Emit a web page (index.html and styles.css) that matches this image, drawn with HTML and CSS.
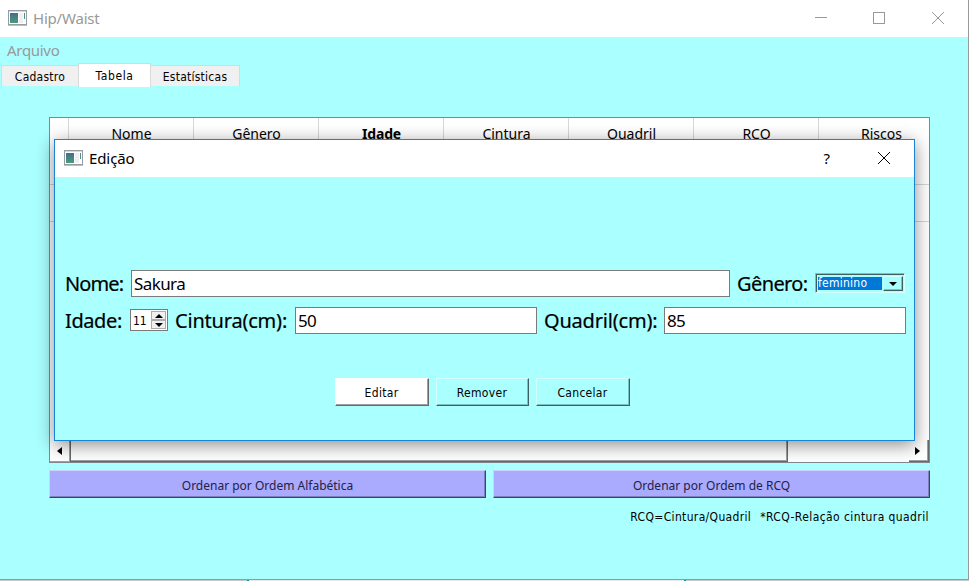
FILE: index.html
```html
<!DOCTYPE html>
<html lang="pt">
<head>
<meta charset="utf-8">
<title>Hip/Waist</title>
<link rel="stylesheet" href="styles.css">
</head>
<body>
<svg width="0" height="0" class="defs" aria-hidden="true">
  <defs>
    <linearGradient id="pane" x1="0" y1="0" x2="0" y2="1"><stop offset="0" stop-color="#426c92"/><stop offset="1" stop-color="#4e9b78"/></linearGradient>
    <symbol id="app" viewBox="0 0 19 16">
      <rect x=".5" y=".5" width="18" height="14" fill="#fff" stroke="#969ca3"/>
      <path d="M0 15.5h19" stroke="#b9bdc1"/>
      <path d="M1 1.5h17" stroke="#d5d9dd"/>
      <rect x="2" y="3" width="8" height="10" fill="url(#pane)"/>
      <rect x="11" y="3" width="4" height="10" fill="#eef0f0"/>
      <rect x="16" y="3" width="1" height="6" fill="#50927f"/>
    </symbol>
  </defs>
</svg>
<div class="window">
  <header class="titlebar">
    <svg class="appicon" width="19" height="16"><use href="#app"/></svg>
    <span class="title">Hip/Waist</span>
    <svg class="controls" width="130" height="12" fill="none" stroke="#999" shape-rendering="crispEdges"><path d="M0 5.5h12M58.500 .5h11v11h-11z"/><path shape-rendering="auto" d="M117 0l12 12M129 0l-12 12"/></svg>
  </header>
  <nav class="menubar"><span>Arquivo</span></nav>
  <div class="tabs">
    <div class="tab first"><span>Cadastro</span></div>
    <div class="tab active"><span>Tabela</span></div>
    <div class="tab last"><span>Estatísticas</span></div>
  </div>
  <main class="content">
    <div class="table">
      <div class="head">
        <div class="corner"></div>
        <div class="cell">Nome</div><div class="cell">Gênero</div><div class="cell sorted">Idade</div><div class="cell">Cintura</div><div class="cell">Quadril</div><div class="cell">RCQ</div><div class="cell">Riscos</div>
      </div>
      <div class="row"></div>
      <div class="blank"></div>
      <div class="scroll">
        <div class="arrow left"><svg width="5" height="8"><path d="M5 0v8L0 4z"/></svg></div>
        <div class="thumb"></div>
        <div class="arrow right"><svg width="5" height="8"><path d="M0 0v8l5-4z"/></svg></div>
      </div>
    </div>
    <div class="sorts">
      <div class="sort"><span>Ordenar por Ordem Alfabética</span></div>
      <div class="sort"><span>Ordenar por Ordem de RCQ</span></div>
    </div>
    <div class="notes"><span class="n1">RCQ=Cintura/Quadril</span><span class="n2">*RCQ-Relação cintura quadril</span></div>
  </main>
</div>
<div class="behind"></div>
<section class="dialog">
  <header class="dialogbar">
    <svg class="appicon" width="19" height="16"><use href="#app"/></svg>
    <span class="dtitle">Edição</span>
    <span class="help">?</span>
    <svg class="close" width="12" height="12" stroke="#000"><path d="M0 0l12 12M12 0L0 12"/></svg>
  </header>
  <div class="form">
    <div class="line">
      <label class="l-nome">Nome:</label><div class="input nome">Sakura</div>
      <label class="l-genero">Gênero:</label>
      <div class="combo"><span>feminino</span><div class="drop"><svg width="8" height="4"><path d="M0 0h8L4 4z"/></svg></div></div>
    </div>
    <div class="line">
      <label class="l-idade">Idade:</label>
      <div class="spin"><span>11</span><div class="steps"><i><svg width="8" height="4"><path d="M0 4h8L4 0z"/></svg></i><i><svg width="8" height="4"><path d="M0 0h8L4 4z"/></svg></i></div></div>
      <label class="l-cintura">Cintura(cm):</label><div class="input cintura">50</div>
      <label class="l-quadril">Quadril(cm):</label><div class="input quadril">85</div>
    </div>
  </div>
  <div class="actions">
    <div class="btn primary">Editar</div><div class="btn mid">Remover</div><div class="btn">Cancelar</div>
  </div>
</section>
</body>
</html>
```
FILE: styles.css
```css
* { box-sizing: border-box; }
body { margin: 0; width: 969px; height: 581px; overflow: hidden; position: relative; background: #aff; font-family: "Noto Sans", sans-serif; color: #000; }
svg { display: block; flex: none; }
.defs { position: absolute; }
span, label, .cell, .btn { white-space: nowrap; }
.window { height: 580px; border-right: 1px solid #999; border-bottom: 1px solid #999; background: #aff; display: flex; flex-direction: column; }
.behind { height: 1px; background: linear-gradient(90deg, #c8c8c8 0 247px, #00a0a0 247px 249px, #e8e8e8 249px 684px, #00a0a0 684px 686px, #c8c8c8 686px); }
.titlebar { height: 37px; flex: none; background: #fff; display: flex; align-items: center; padding: 0 23px 0 8px; }
.appicon { margin-top: -1px; }
.title { margin: -2px 0 0 6px; font-size: 15px; color: #999; letter-spacing: -.2px; }
.controls { margin-left: auto; margin-top: -1px; }
.menubar { height: 27px; flex: none; padding-left: 7px; font-size: 15px; line-height: 27px; color: #999; letter-spacing: -.3px; }
.tabs { height: 23px; flex: none; display: flex; align-items: flex-end; padding-left: 1px; }
.tab { height: 21px; margin-bottom: 1px; background: #f0f0f0; border: 1px solid #d9d9d9; border-bottom: 0; font-family: "DejaVu Sans Condensed", "DejaVu Sans", sans-serif; font-stretch: condensed; font-size: 12px; line-height: 22px; letter-spacing: .25px; display: flex; justify-content: center; }
.first { width: 77px; border-right: 0; }
.active { width: 73px; height: 24px; margin-bottom: 0; background: #fff; line-height: 24px; letter-spacing: .6px; }
.last { width: 89px; border-left: 0; }
.content { padding: 30px 38px 0 49px; display: flex; flex-direction: column; }
.table { height: 346px; border: 1px solid #828790; background: #fff; display: flex; flex-direction: column; overflow: hidden; }
.head { height: 67px; flex: none; border-bottom: 1px solid #d5d5d5; display: flex; }
.corner { width: 19px; flex: none; border-right: 1px solid #d9d9d9; }
.cell { width: 125px; flex: none; border-right: 1px solid #d9d9d9; text-align: center; font-size: 14px; line-height: 31px; padding-left: 1px; }
.sorted { font-weight: 700; letter-spacing: -.2px; }
.row { height: 37px; border-bottom: 1px solid #d5d5d5; flex: none; }
.blank { flex: 1; }
.scroll { height: 22px; display: flex; }
.arrow { width: 20px; display: flex; align-items: center; justify-content: center; border-right: 1px solid #a0a0a0; border-bottom: 1px solid #a0a0a0; }
.left { padding-right: 1px; }
.thumb { width: 718px; border: solid #696969; border-width: 0 1px 1px; box-shadow: inset -1px -1px #a0a0a0; }
.right { margin-left: auto; padding-right: 2px; border-color: #696969; box-shadow: inset -1px -1px #a0a0a0; }
.sorts { display: grid; grid-template-columns: 437px 437px; gap: 7px; margin-top: 7px; }
.sort { height: 28px; background: #aaf; border: 1px solid; border-color: #cfcfff #404060 #404060 #cfcfff; box-shadow: inset -1px -1px #7f7fbf; text-align: center; font-size: 12px; line-height: 29px; color: #222244; }
.notes { display: flex; justify-content: flex-end; gap: 9px; padding-right: 1px; margin-top: 10px; font: 12px/18px "DejaVu Sans Condensed", "DejaVu Sans", sans-serif; font-stretch: condensed; }
.n1 { letter-spacing: .34px; }
.n2 { letter-spacing: .41px; }
.dialog { position: absolute; left: 54px; top: 139px; width: 861px; height: 302px; border: 1px solid #1883d7; background: #aff; box-shadow: 0 4px 17px rgba(0,0,0,.45); display: flex; flex-direction: column; clip-path: inset(-22px -15px -22px -20px); }
.dialogbar { height: 37px; flex: none; display: flex; align-items: center; background: #fff; padding: 0 24px 0 9px; }
.dialogbar .appicon { margin-top: -2px; }
.dtitle { margin: -2px 0 0 6px; font-size: 15px; letter-spacing: -.1px; }
.help { margin: -2px 48px 0 auto; font-size: 15px; }
.close { margin-top: -1px; }
.form { margin-top: 93px; padding: 0 8px 0 10px; display: flex; flex-direction: column; gap: 10px; font-family: "DejaVu Sans Condensed", "DejaVu Sans", sans-serif; font-stretch: condensed; }
.line { display: flex; height: 27px; align-items: center; }
.line label { font-family: "Noto Sans", sans-serif; font-size: 20px; line-height: 27px; flex: none; -webkit-text-stroke: .2px #000; }
.line .l-nome { width: 66px; letter-spacing: -.9px; }
.line .l-genero { width: 78px; margin-left: 7px; letter-spacing: -.6px; }
.line .l-idade { width: 65px; letter-spacing: -.4px; }
.l-cintura, .l-quadril { width: 120px; margin-left: 7px; letter-spacing: -.2px; }
.input { height: 27px; border: 1px solid #7a7a7a; background: #fff; padding-left: 2px; font: 17px/26px "Noto Sans", sans-serif; letter-spacing: -.6px; flex: none; }
.nome { width: 599px; }
.cintura, .quadril { width: 242px; }
.combo { width: 90px; height: 20px; flex: none; border: 1px solid; border-color: #7fbfbf #d4ffff #d4ffff #7fbfbf; box-shadow: inset 1px 1px #406060; padding: 2px 1px 1px 2px; margin-top: -1px; display: flex; font-size: 12px; line-height: 14px; }
.combo span { background: #0078d7; color: #fff; width: 64px; margin: 1px 1px 1px 0; height: 13px; line-height: 13px; letter-spacing: .25px; }
.drop { width: 20px; border: 1px solid; border-color: #d4ffff #406060 #406060 #d4ffff; box-shadow: inset -1px -1px #7fbfbf; display: flex; align-items: center; justify-content: center; }
.spin { width: 38px; height: 22px; border: 1px solid #7a7a7a; background: #fff; display: flex; justify-content: space-between; padding: 1px 1px 1px 2px; font-size: 12px; line-height: 20px; margin-top: -1px; flex: none; }
.steps { width: 15px; display: grid; grid-template-rows: 1fr 1fr; }
.steps i { border: 1px solid #acacac; background: #f0f0f0; display: flex; align-items: center; justify-content: center; }
.actions { display: flex; justify-content: center; gap: 7px; margin: 44px 5px 0 0; }
.btn { width: 94px; height: 28px; border: 1px solid; border-color: #d4ffff #406060 #406060 #d4ffff; box-shadow: inset -1px -1px #7fbfbf; font: 12px/28px "DejaVu Sans Condensed", "DejaVu Sans", sans-serif; font-stretch: condensed; letter-spacing: .3px; text-align: center; }
.mid { width: 93px; }
.primary { background: #fff; border-color: #fff #696969 #696969 #fff; box-shadow: inset -1px -1px #a0a0a0; }
```
